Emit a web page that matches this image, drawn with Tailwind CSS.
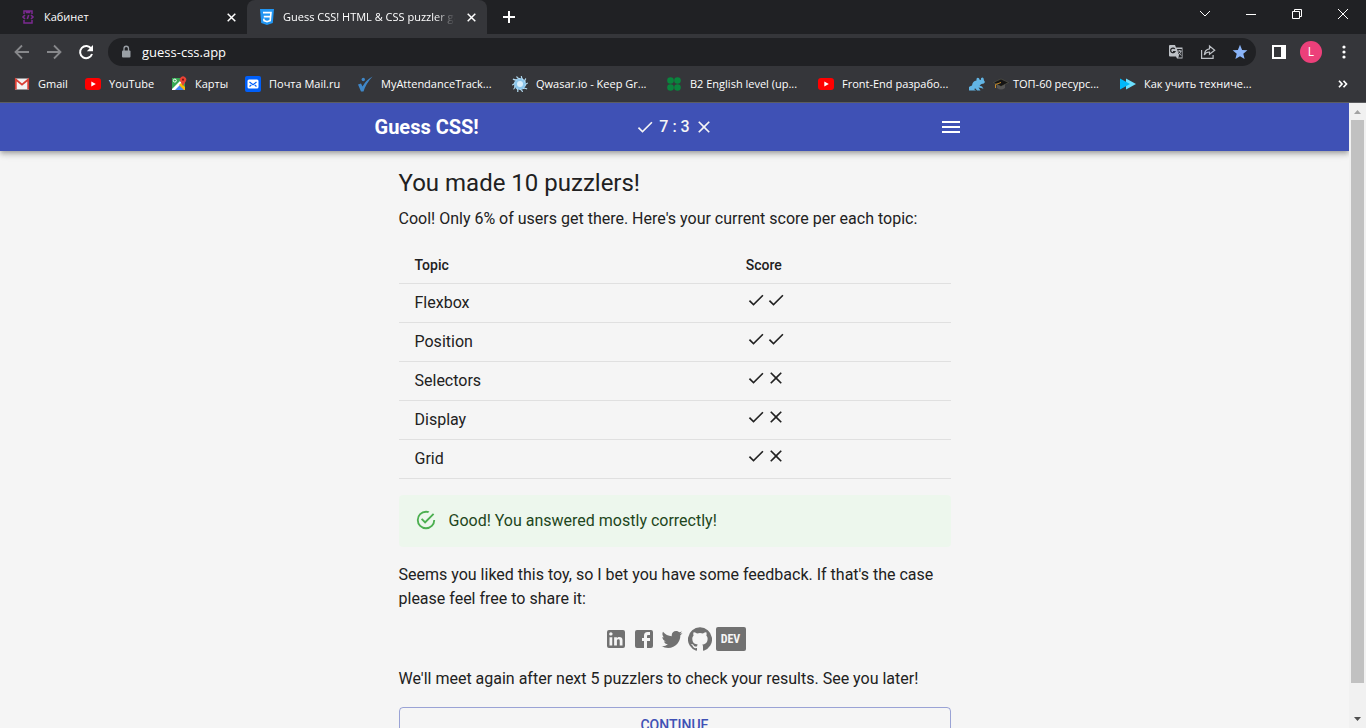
<!DOCTYPE html>
<html lang="en">
<head>
<meta charset="utf-8">
<meta name="viewport" content="width=device-width, initial-scale=1">
<title>Guess CSS! HTML &amp; CSS puzzler game</title>
<script src="https://cdn.jsdelivr.net/npm/@tailwindcss/browser@4"></script>
</head>
<body class="flex h-screen flex-col overflow-hidden bg-[#f5f5f5] font-['Roboto',sans-serif] text-[#212121]">
<svg class="hidden" aria-hidden="true">
  <symbol id="check" viewBox="0 0 24 24"><path d="M9 16.17 4.83 12l-1.42 1.41L9 19 21 7l-1.41-1.41z"/></symbol>
  <symbol id="close" viewBox="0 0 24 24"><path d="M19 6.41 17.59 5 12 10.59 6.41 5 5 6.41 10.59 12 5 17.59 6.41 19 12 13.41 17.59 19 19 17.59 13.41 12z"/></symbol>
  <symbol id="youtube" viewBox="0 0 16 16"><rect y="2" width="16" height="12" rx="3" fill="#f00"/><path d="M6.300 5.400v5.200L10.800 8z" fill="#fff"/></symbol>
</svg>

<!-- Browser chrome -->
<div class="shrink-0 bg-[#35363a] font-['Open_Sans','Noto_Sans',sans-serif] text-xs text-white">
  <!-- Tab strip -->
  <div class="flex h-[34px] bg-[#202124]">
    <div class="flex w-[247px] items-center rounded-br-lg pr-2 pl-5">
      <svg class="size-4" viewBox="0 0 16 16" fill="none" stroke="#7b2a91" stroke-width="1.500"><path d="M4 5V2h8v3M4 11v3h8v-3M6.500 2v1.500h3V2M6 14h4"/><path d="M5 6 3 8l2 2M11 6l2 2-2 2M8.700 6 7.300 10" stroke-width="1.600"/></svg>
      <span class="ml-2 flex-1 text-[11px]">Кабинет</span>
      <button class="flex size-4 items-center justify-center" aria-label="Close tab"><svg class="size-[9px]" viewBox="0 0 9 9" stroke="#fff" stroke-width="1.500"><path d="m.7.7 7.600 7.600m0-7.600L.7 8.300"/></svg></button>
    </div>
    <div class="flex w-60 items-center rounded-t-lg bg-[#35363a] pr-2 pl-3">
      <svg class="size-4 shrink-0" viewBox="0 0 16 16"><path d="M1 0h14l-1.200 14L8 16l-5.800-2z" fill="#2196f3"/><path d="M4 3.600h8l-.8 8L8 12.700l-3-1.100-.2-2M4.800 7.600h6.500" fill="none" stroke="#fff" stroke-width="1.600"/></svg>
      <span class="ml-2 flex-1 overflow-hidden text-[11px] whitespace-nowrap [mask-image:linear-gradient(to_right,#000_88%,transparent)]">Guess CSS! HTML &amp; CSS puzzler game</span>
      <button class="ml-2 flex size-4 shrink-0 items-center justify-center" aria-label="Close tab"><svg class="size-[9px]" viewBox="0 0 9 9" stroke="#fff" stroke-width="1.500"><path d="m.7.7 7.600 7.600m0-7.600L.7 8.300"/></svg></button>
    </div>
    <button class="ml-3 flex w-5 items-center justify-center" aria-label="New tab"><svg class="size-3" viewBox="0 0 12 12" stroke="#fff" stroke-width="2"><path d="M6 0v12M0 6h12"/></svg></button>
    <div class="ml-auto flex h-7 stroke-white">
      <button class="flex w-[46px] items-center justify-center" aria-label="Search tabs"><svg class="h-2 w-3" viewBox="0 0 12 8" fill="none"><path d="m1 1 5 5 5-5"/></svg></button>
      <button class="flex w-[46px] items-center justify-center" aria-label="Minimize"><svg class="h-px w-2.5" viewBox="0 0 10 1"><path d="M0 .5h10"/></svg></button>
      <button class="flex w-[46px] items-center justify-center" aria-label="Restore"><svg class="size-2.5" viewBox="0 0 10 10" fill="none"><path d="M.5 2.500h7v7h-7zM2.500 2.500v-2h7v7h-2"/></svg></button>
      <button class="flex w-[46px] items-center justify-center" aria-label="Close window"><svg class="size-2.5" viewBox="0 0 10 10"><path d="m0 0 10 10M10 0 0 10"/></svg></button>
    </div>
  </div>

  <!-- Toolbar -->
  <div class="flex h-9 items-center pr-2.5 pl-3.5">
    <button class="flex w-8 justify-start" aria-label="Back"><svg class="size-4" viewBox="0 0 16 16" fill="none" stroke="#87888b" stroke-width="1.800"><path d="M15 8H2M8 1.500 1.500 8 8 14.500"/></svg></button>
    <button class="flex w-8 justify-start" aria-label="Forward"><svg class="size-4" viewBox="0 0 16 16" fill="none" stroke="#87888b" stroke-width="1.800"><path d="M1 8h13M8 1.500 14.500 8 8 14.500"/></svg></button>
    <button class="flex w-[30px] justify-start" aria-label="Reload"><svg class="size-4" viewBox="0 0 16 16"><path d="M13.300 4.700A6.100 6.100 0 1 0 14 10" fill="none" stroke="#fff" stroke-width="2"/><path d="M15 1v6.200H8.800z" fill="#fff"/></svg></button>
    <div class="flex h-7 flex-1 items-center rounded-full bg-[#202124] pr-2 pl-3">
      <svg class="h-3.5 w-3" viewBox="0 0 12 14"><rect x="2" y="5.500" width="8.500" height="7" rx="1" fill="#9aa0a6"/><path d="M4 6V3.500a2.250 2.250 0 0 1 4.500 0V6" fill="none" stroke="#9aa0a6" stroke-width="1.300"/></svg>
      <input class="ml-2.5 min-w-0 flex-1 bg-transparent pt-0.5 text-[13px] text-white outline-none" aria-label="Address" value="guess-css.app">
      <div class="flex gap-4">
        <button aria-label="Translate"><svg class="size-4" viewBox="0 0 16 16"><path d="M2 1h5l1 2.500h6.500V14.500H9L8 12.500H2a1 1 0 0 1-1-1V2a1 1 0 0 1 1-1z" fill="#bdc1c6"/><path d="M9 5h4.800v8.500H10l1-1.500z" fill="#202124"/><path d="M6.800 5A2.300 2.300 0 1 0 7 7.500H5" fill="none" stroke="#202124" stroke-width="1.200"/><path d="M9.500 7h4M11.700 6v1M13 7c-.5 2-1.500 3-3 4M10.500 8.500l2.700 3" fill="none" stroke="#bdc1c6"/></svg></button>
        <button aria-label="Share"><svg class="size-4" viewBox="0 0 16 16" fill="none" stroke="#bdc1c6" stroke-width="1.200"><path d="M1.600 6v8.400h11.500V11M9.500 2l5.200 4.200-5.200 4.100V8C7 8 5.300 9 4.300 11c.2-3.500 2-5.800 5.200-6.200z"/></svg></button>
        <button aria-label="Edit bookmark"><svg class="size-4" viewBox="0 0 16 16" fill="#8ab4f8"><path d="m8 .8 2.100 5.100 5.300.4-4.100 3.500 1.300 5.200L8 12.200l-4.600 2.800 1.300-5.200L.6 6.300l5.300-.4z"/></svg></button>
      </div>
    </div>
    <button class="ml-4 flex w-7" aria-label="Side panel"><svg class="h-3.5 w-3.5" viewBox="0 0 14 14" fill="none" stroke="#fff" stroke-width="2"><path d="M1 1h12v12H1z"/><path d="M11 1v12" stroke-width="4"/></svg></button>
    <button class="flex size-[22px] items-center justify-center rounded-full bg-[#ec407a]" aria-label="Profile">L</button>
    <button class="ml-2.5 flex w-6 justify-center" aria-label="Menu"><svg class="h-4 w-4" viewBox="0 0 16 16" fill="#fff"><circle cx="8" cy="3" r="1.600"/><circle cx="8" cy="8" r="1.600"/><circle cx="8" cy="13" r="1.600"/></svg></button>
  </div>

  <!-- Bookmarks -->
  <nav class="flex h-[33px] items-center border-b border-[#5c5d60] pb-1 pl-3.5 text-[11px] whitespace-nowrap" aria-label="Bookmarks">
    <a href="#" class="flex w-[71px] items-center gap-2"><svg class="size-4" viewBox="0 0 16 16"><path d="M1 2.500h14v11H1z" fill="#f2f2f2"/><path d="M1.800 13.500V3.500L8 8.700l6.200-5.200v10" fill="none" stroke="#d93f35" stroke-width="1.800"/></svg>Gmail</a>
    <a href="#" class="flex w-[86px] items-center gap-2"><svg class="size-4"><use href="#youtube"/></svg>YouTube</a>
    <a href="#" class="flex w-[74px] items-center gap-2"><svg class="size-4" viewBox="0 0 16 16"><path d="M1 2h13v12H1z" fill="#35a853"/><path d="m2 14 6-6 6 6z" fill="#4285f4"/><path d="m1 13 8-8 2 2-7 7H1z" fill="#fff"/><path d="m8 9 2-2 4 4v3h-1z" fill="#fbbc04"/><circle cx="3.800" cy="4.600" r="1.500" fill="none" stroke="#fff"/><path d="M12 10 9.300 5.300a3.200 3.200 0 1 1 5.500 0z" fill="#ea4335"/><circle cx="12" cy="3.700" r="1.100" fill="#811411"/></svg>Карты</a>
    <a href="#" class="flex w-[112px] items-center gap-2"><svg class="size-4" viewBox="0 0 16 16"><rect width="16" height="16" rx="2" fill="#005ff9"/><rect x="2.500" y="3.500" width="11" height="9" rx="1.500" fill="#fff"/><path d="m4.500 6 3.500 2.700L11.500 6M4.500 10.500 6.300 9M11.500 10.500 9.700 9" fill="none" stroke="#005ff9" stroke-width="1.200"/></svg>Почта Mail.ru</a>
    <a href="#" class="flex w-[155px] items-center gap-2"><svg class="size-4" viewBox="0 0 16 16" fill="#3f87c8"><path d="M1 8.500 4 7.500l1.500 3Q9 4 15.500.5 9 7.500 6.500 15.500H4z"/><circle cx="6.300" cy="3.500" r="1.700"/></svg>MyAttendanceTrack...</a>
    <a href="#" class="flex w-[154px] items-center gap-2"><svg class="size-4" viewBox="0 0 16 16"><circle cx="8" cy="8" r="6" fill="#8cc6ec"/><path d="M8 3Q5 2 4.500.5M11 4Q9 1.500 9.500 0M12.800 6.500Q12.500 3.500 14 2.500M13 9.500Q14.500 7 16 7M11 12.300Q14 12 15 13M8 13.300Q10.500 14.500 10.500 16M5 12.300Q6.500 14.500 5.500 16M3 9.500Q3 12.500 1.500 13.300M3 6.500Q1.500 9 0 9M5 4Q2 4 1 3" fill="none" stroke="#b5dcf2" stroke-width="1.200"/><circle cx="8" cy="8" r="3" fill="#d8eefb"/></svg>Qwasar.io - Keep Gr...</a>
    <a href="#" class="flex w-[152px] items-center gap-2"><svg class="size-4" viewBox="0 0 16 16" fill="#0a843d"><circle cx="4.500" cy="4.500" r="3.300"/><circle cx="11.500" cy="4.500" r="3.300"/><circle cx="4.500" cy="11.500" r="3.300"/><circle cx="11.500" cy="11.500" r="3.300"/></svg>B2 English level (up...</a>
    <a href="#" class="flex w-[151px] items-center gap-2"><svg class="size-4"><use href="#youtube"/></svg>Front-End разрабо...</a>
    <a href="#" class="flex w-[151px] items-center gap-2"><svg class="size-4" viewBox="0 0 16 16" fill="#62b5e5"><path d="M0 14.500V11Q1 10 3 9.500 3.500 5 7.500 4.500V2.800Q8.500 1 10 2.200L10.800 4 12 3.800V2.200Q13.500.8 14.500 2.200L15 4.500 16 6Q15.500 8 12.500 8L10.500 9.500 13 10.500 14.500 12.800 12 12 9.500 11.500 11.500 14.500H8L6.500 12.500 5 13 7 14.500z"/></svg><span class="flex items-center gap-1"><svg class="h-3.5 w-4" viewBox="0 0 16 14"><path d="M4 7v4q4 3 8 0V7z" fill="#555"/><path d="M8 2 15.500 5.500 8 9.500.5 5.500z" fill="#151515" stroke="#665" stroke-width=".5"/><path d="M8 5.500 2.500 7.500v3.500" fill="none" stroke="#c48a2a"/></svg>ТОП-60 ресурс...</span></a>
    <a href="#" class="flex items-center gap-2"><svg class="size-4" viewBox="0 0 16 16"><path d="M6 2.500 16 8 6 13.500z" fill="#6be0ff"/><path d="M0 2.500 10 8 0 13.500z" fill="#00b8fa"/></svg>Как учить техниче...</a>
    <button class="mr-[18px] ml-auto" aria-label="More bookmarks"><svg class="h-2 w-2.5" viewBox="0 0 10 8" fill="none" stroke="#fff" stroke-width="1.700"><path d="m1 .7 3 3.300-3 3.300M5.500.7l3 3.300-3 3.300"/></svg></button>
  </nav>
</div>

<!-- Page viewport -->
<div class="flex min-h-0 flex-1">
  <div class="min-w-0 flex-1 overflow-hidden">
    <header class="bg-[#3f51b5] text-white shadow-[0_2px_4px_-1px_rgba(0,0,0,0.2),0_4px_5px_rgba(0,0,0,0.14),0_1px_10px_rgba(0,0,0,0.12)]">
      <div class="mx-auto grid h-12 max-w-[600px] grid-cols-[1fr_auto_1fr] items-center">
        <a href="#" class="text-xl font-bold">Guess CSS!</a>
        <div class="flex items-center gap-1 text-base font-medium text-[#f5f5f5]">
          <svg class="size-5 fill-current" aria-label="Correct"><use href="#check"/></svg><span>7 : 3</span><svg class="size-5 fill-current" aria-label="Wrong"><use href="#close"/></svg>
        </div>
        <button class="justify-self-end p-3" aria-label="Open menu"><svg class="size-6 fill-white" viewBox="0 0 24 24"><path d="M3 18h18v-2H3zm0-5h18v-2H3zm0-7v2h18V6z"/></svg></button>
      </div>
    </header>

    <main class="mx-auto max-w-[600px] px-6 pt-4">
      <h1 class="text-2xl">You made 10 puzzlers!</h1>
      <p class="mt-2">Cool! Only 6% of users get there. Here's your current score per each topic:</p>

      <table class="mt-4 w-full text-left">
        <thead class="text-sm leading-6">
          <tr class="border-b border-[#e0e0e0]"><th class="w-3/5 px-4 py-1.5 font-medium">Topic</th><th class="px-4 py-1.5 font-medium">Score</th></tr>
        </thead>
        <tbody>
          <tr class="h-[39px] border-b border-[#e0e0e0]"><td class="px-4">Flexbox</td><td class="px-4"><div class="flex pb-1.5"><svg class="size-5 fill-current"><use href="#check"/></svg><svg class="size-5 fill-current"><use href="#check"/></svg></div></td></tr>
          <tr class="h-[39px] border-b border-[#e0e0e0]"><td class="px-4">Position</td><td class="px-4"><div class="flex pb-1.5"><svg class="size-5 fill-current"><use href="#check"/></svg><svg class="size-5 fill-current"><use href="#check"/></svg></div></td></tr>
          <tr class="h-[39px] border-b border-[#e0e0e0]"><td class="px-4">Selectors</td><td class="px-4"><div class="flex pb-1.5"><svg class="size-5 fill-current"><use href="#check"/></svg><svg class="size-5 fill-current"><use href="#close"/></svg></div></td></tr>
          <tr class="h-[39px] border-b border-[#e0e0e0]"><td class="px-4">Display</td><td class="px-4"><div class="flex pb-1.5"><svg class="size-5 fill-current"><use href="#check"/></svg><svg class="size-5 fill-current"><use href="#close"/></svg></div></td></tr>
          <tr class="h-[39px] border-b border-[#e0e0e0]"><td class="px-4">Grid</td><td class="px-4"><div class="flex pb-1.5"><svg class="size-5 fill-current"><use href="#check"/></svg><svg class="size-5 fill-current"><use href="#close"/></svg></div></td></tr>
        </tbody>
      </table>

      <div role="status" class="mt-4 flex gap-3 rounded bg-[#edf7ed] px-4 py-3.5 text-[#1e4620]">
        <svg class="size-[22px] shrink-0 fill-[#4caf50]" viewBox="0 0 24 24"><path d="M20 12A8 8 0 1 1 12 4c.76 0 1.500.11 2.200.31l1.570-1.570A9.700 9.700 0 0 0 12 2a10 10 0 1 0 10 10M7.910 10.080 6.500 11.500 11 16 21 6l-1.410-1.420L11 13.170z"/></svg>
        <span>Good! You answered mostly correctly!</span>
      </div>

      <p class="mt-4">Seems you liked this toy, so I bet you have some feedback. If that's the case please feel free to share it:</p>

      <div class="mt-4 flex justify-center gap-1">
        <a href="#" aria-label="LinkedIn"><svg class="size-6 fill-[#717171]" viewBox="0 0 24 24"><path d="M19 3a2 2 0 0 1 2 2v14a2 2 0 0 1-2 2H5a2 2 0 0 1-2-2V5a2 2 0 0 1 2-2h14m-.5 15.500v-5.300a3.260 3.260 0 0 0-3.260-3.260c-.85 0-1.840.52-2.320 1.300v-1.110h-2.790v8.370h2.790v-4.930c0-.77.62-1.400 1.390-1.400a1.400 1.400 0 0 1 1.400 1.400v4.930h2.790M6.880 8.560a1.680 1.680 0 0 0 1.680-1.680c0-.93-.75-1.690-1.680-1.690a1.690 1.690 0 0 0-1.690 1.690c0 .93.76 1.680 1.690 1.680m1.390 9.940v-8.370H5.500v8.370h2.770z"/></svg></a>
        <a href="#" aria-label="Facebook"><svg class="size-6 fill-[#717171]" viewBox="0 0 24 24"><path d="M5 3h14a2 2 0 0 1 2 2v14a2 2 0 0 1-2 2H5a2 2 0 0 1-2-2V5a2 2 0 0 1 2-2m13 2h-2.500A3.500 3.500 0 0 0 12 8.500V11h-2v3h2v7h3v-7h3v-3h-3V9a1 1 0 0 1 1-1h2V5z"/></svg></a>
        <a href="#" aria-label="Twitter"><svg class="size-6 fill-[#717171]" viewBox="0 0 24 24"><path d="M22.460 6c-.77.35-1.600.58-2.460.69.88-.53 1.560-1.370 1.880-2.380-.83.5-1.750.85-2.720 1.050C18.370 4.500 17.260 4 16 4c-2.350 0-4.270 1.920-4.270 4.290 0 .34.04.67.11.98C8.280 9.090 5.110 7.380 3 4.790c-.37.63-.58 1.370-.58 2.150 0 1.490.75 2.810 1.910 3.560-.71 0-1.370-.2-1.950-.5v.03c0 2.080 1.480 3.820 3.440 4.210a4.220 4.220 0 0 1-1.930.07 4.280 4.280 0 0 0 4 2.980 8.521 8.521 0 0 1-5.330 1.840c-.34 0-.68-.02-1.020-.06C3.440 20.290 5.700 21 8.120 21 16 21 20.330 14.460 20.330 8.790c0-.19 0-.37-.01-.56.84-.6 1.560-1.360 2.140-2.230z"/></svg></a>
        <a href="#" aria-label="GitHub"><svg class="size-6 fill-[#717171]" viewBox="0 0 24 24"><path d="M12 .3a12 12 0 0 0-3.800 23.400c.6.1.8-.3.8-.6v-2c-3.300.7-4-1.600-4-1.600-.6-1.400-1.400-1.800-1.400-1.800-1-.7.1-.7.1-.7 1.200 0 1.900 1.200 1.900 1.200 1 1.800 2.800 1.300 3.500 1 0-.8.4-1.300.7-1.600-2.700-.3-5.500-1.300-5.500-6 0-1.200.5-2.300 1.300-3.100-.2-.4-.6-1.600 0-3.200 0 0 1-.3 3.400 1.200a11.500 11.500 0 0 1 6 0c2.300-1.500 3.300-1.200 3.300-1.200.6 1.600.2 2.800 0 3.200.9.8 1.300 1.900 1.300 3.200 0 4.600-2.800 5.600-5.500 5.900.5.4.9 1 .9 2.200v3.300c0 .3.1.7.8.6A12 12 0 0 0 12 .3"/></svg></a>
        <a href="#" class="flex h-6 w-[30px] items-center justify-center rounded-xs bg-[#717171] font-['Liberation_Sans_Narrow','Roboto_Condensed','Roboto',sans-serif] text-xs font-bold text-[#f5f5f5]">DEV</a>
      </div>

      <p class="mt-4">We'll meet again after next 5 puzzlers to check your results. See you later!</p>
      <button class="mt-4 h-9 w-full rounded border border-[#3f51b5]/50 text-sm font-medium text-[#3f51b5]">CONTINUE</button>
    </main>
  </div>

  <!-- Scrollbar -->
  <div class="flex w-[17px] shrink-0 flex-col items-center bg-[#f1f1f1]" aria-hidden="true">
    <svg class="h-[17px] w-[17px]" viewBox="0 0 17 17" fill="#a3a3a3"><path d="M5 11h7L8.500 7z"/></svg>
    <div class="w-[13px] flex-1 bg-[#c1c1c1]"></div>
    <svg class="mt-7 h-[17px] w-[17px]" viewBox="0 0 17 17" fill="#505050"><path d="M5 6h7l-3.500 4z"/></svg>
  </div>
</div>
</body>
</html>
